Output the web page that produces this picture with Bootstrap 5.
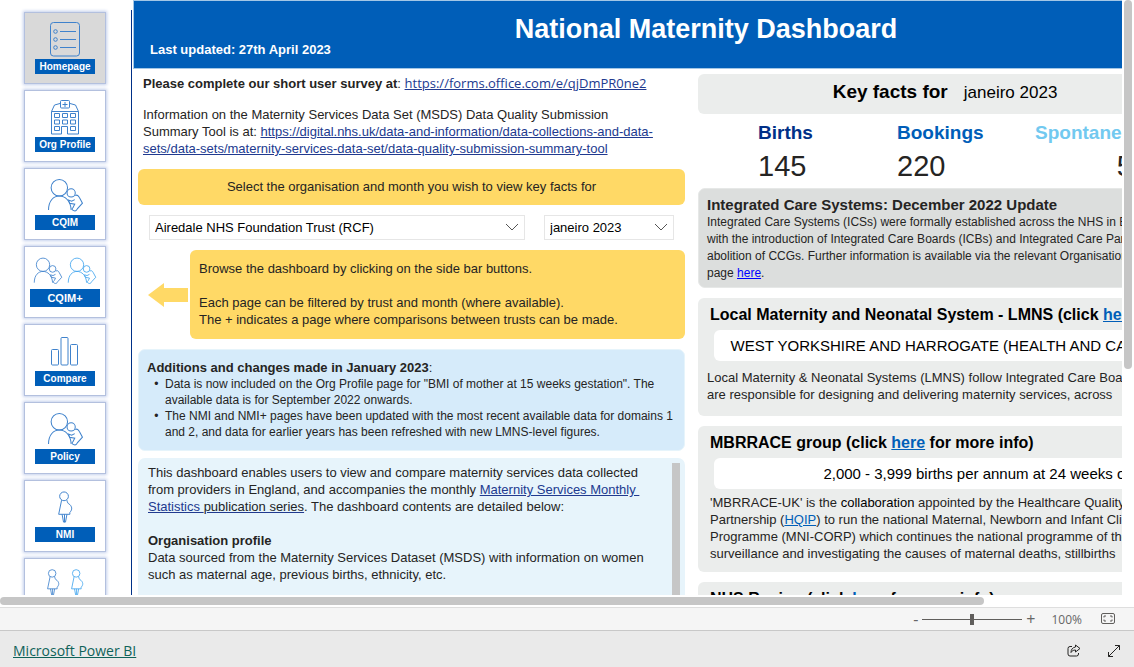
<!DOCTYPE html>
<html lang="en">
<head>
<meta charset="utf-8">
<meta name="viewport" content="width=device-width, initial-scale=1">
<title>National Maternity Dashboard</title>
<link href="https://cdn.jsdelivr.net/npm/bootstrap@5.3.0/dist/css/bootstrap.min.css" rel="stylesheet">
<style>
  body { font-family: "Liberation Sans", Arial, sans-serif; font-size: 13px; line-height: 17px; color: #252423; background: #fff; }
  a { color: #213a8f; }
  .viewer { min-height: 0; }
  .viewport { min-width: 0; }
  .canvas { min-width: 1278px; min-height: 720px; }

  /* side bar */
  .side { flex: 0 0 132px; margin-top: 10px; padding: 2px 25px 0 24px; border-right: 1px solid #003087; }
  .tiles { gap: 6px; }
  .tile { height: 72px; padding: 9px 0 0; background: #fff; border: 1px solid #b3c0de; border-radius: 0; box-shadow: 0 0 3px 1px #c3cfec; color: #005eb8; }
  .tile.active { background: #d9d9d9; }
  .tile svg { height: 35px; fill: none; stroke: #3f82cc; stroke-width: 1; flex: none; }
  .tile svg.light { stroke: #41a5ee; }
  .tile-label { width: 60px; margin-top: 2px; background: #005eb8; color: #fff; font-size: 10px; font-weight: 700; line-height: 15px; }
  .tile-wide svg { height: 30px; }
  .tile-wide .tile-label { width: 70px; margin-top: 3px; font-size: 11px; line-height: 18px; }

  /* heading band */
  .band { background: #005eb8; border: 1px solid #a3c7e6; border-width: 1px 0 1px 1px; height: 69px; margin-left: 1px; color: #fff; }
  .band h1 { font-size: 27px; font-weight: 700; line-height: 32px; padding-top: 12px; }
  .band p { font-size: 13px; font-weight: 700; padding-left: 16px; margin-top: -4px; }

  .left-col { flex: 0 0 547px; margin-left: 6px; padding-top: 6px; }
  .intro { padding-left: 5px; }
  .segoe { font-family: "Open Sans", sans-serif; }
  .yellow { background: #ffd966; border-radius: 6px; }
  .prompt { line-height: 36px; margin-top: 12px; }
  .pickers { gap: 19px; margin: 10px 11px; }
  .picker { height: 25px; padding: 1px 24px 0 5px; border: 1px solid #e6e6e6; border-radius: 0; color: #000; font-size: 13px; line-height: 22px; background-size: 14px 9px; background-position: right 5px center;
    background-image: url("data:image/svg+xml,%3csvg xmlns='http://www.w3.org/2000/svg' viewBox='0 0 14 9'%3e%3cpath fill='none' stroke='%23555' d='M1 1l6 6 6-6'/%3e%3c/svg%3e"); }
  .month { width: 130px; }
  .arrow { flex: 0 0 52px; }
  .guide { padding: 10px 9px 11px; }
  .changes { background: #d6ebfa; border: 1px solid #e6f4fb; border-radius: 7px; margin-top: 10px; padding: 9px 8px 10px; }
  .changes ul { padding-left: 18px; font-size: 12px; line-height: 16px; list-style-type: "•  "; }
  .about { background: #e7f4fb; border-radius: 7px; margin-top: 7px; height: 250px; padding: 6px 5px 0 10px; }
  .inner-bar { flex: 0 0 8px; background: #c6c6c6; margin-top: -1px; }

  .right-col { margin-left: 13px; padding-top: 5px; white-space: nowrap; }
  .grey { background: #ebedec; border-radius: 6px; }
  .facts { height: 40px; padding: 0 86px 3px 0; color: #000; }
  .facts h2 { font-size: 19px; font-weight: 700; }
  .facts span { font-size: 17px; }
  .figures { display: grid; grid-template-columns: 139px 138px 196px; padding: 8px 0 6px 60px; }
  .figures dt { font-size: 19px; line-height: 22px; margin-bottom: 6px; }
  .figures dd { font-size: 29px; line-height: 32px; margin: 0; }
  .navy { color: #003087; }
  .blue { color: #005eb8; }
  .sky { color: #72c9f0; }
  .ics { background: #dcdedd; border: 1px solid #e6e8e7; border-radius: 7px; padding: 7px 8px 5px; font-size: 12px; }
  .ics h2 { font-size: 15px; font-weight: 700; line-height: 18px; }
  .ics a { color: #00f; }
  .topic { margin-top: 10px; padding: 6px 0 10px 12px; }
  .topic h2 { font-size: 16px; font-weight: 700; line-height: 21px; color: #000; }
  .topic a { color: #005eb8; }
  .topic .value { background: #fff; border-radius: 6px; color: #000; font-size: 15px; line-height: 31px; margin: 5px 0 5px 4px; }
  .topic .lmns-text { margin-left: -3px; padding: 3px 0; }

  /* scroll bars and viewer chrome */
  .v-track { flex: 0 0 12px; padding-left: 2px; }
  .v-thumb { width: 8px; height: 62%; border-radius: 4px; background: #c6c6c6; }
  .h-track { height: 12px; padding: 2px 0; }
  .h-thumb { width: 86.8%; height: 8px; border-radius: 4px; background: #c6c6c6; }
  .zoom-row { height: 23px; gap: 4px; padding-right: 18px; background: #f5f5f5; border-top: 1px solid #dedede; color: #666; }
  .zoom-row button, .brand-row button { color: inherit; line-height: 1; }
  .zoom-row input { appearance: none; width: 100px; height: 11px; background: linear-gradient(#605e5c, #605e5c) center / 100% 1px no-repeat; }
  .zoom-row input::-webkit-slider-thumb { appearance: none; width: 4px; height: 11px; background: #605e5c; }
  .zoom-row span { font-size: 12px; margin: 0 14px 0 12px; }
  .brand-row { height: 37px; padding: 3px 13px 0; gap: 26px; background: #eaeaea; border-top: 1px solid #c8c8c8; color: #252423; }
  .brand-row a { font-size: 14px; color: #0f6259; }
</style>
</head>
<body class="d-flex flex-column vh-100 overflow-hidden">

<svg class="d-none" aria-hidden="true">
  <symbol id="parent" viewBox="0 0 36 34">
    <circle cx="12" cy="9.500" r="8"/>
    <path d="M1.500 31c0-9 5-13.500 10.500-13.500S23 22 23.500 31"/>
    <circle cx="23.500" cy="14.500" r="4"/>
    <path d="M27.500 17c2-1 3 0 4 2l3 5.500-5 5.500c-1 2-2 2.500-4 1.500s-1-2 0-3l1.500-3-5-1-1-3 3 1 3-1.500"/>
  </symbol>
  <symbol id="bump" viewBox="0 0 18 36">
    <circle cx="8" cy="6.500" r="4.500"/>
    <path d="M5.500 10.500L2.500 25H14v-2c3-3 2-6 0-8-2-1-2.500-2-3-4.500M6 25l1.500 8h2L11 25M8.500 25v8"/>
  </symbol>
</svg>

<div class="viewer d-flex flex-grow-1">
  <div class="viewport flex-grow-1 overflow-hidden">
    <div class="canvas d-flex">

      <nav class="side" aria-label="Dashboard pages">
        <div class="tiles d-flex flex-column">
          <button class="tile active d-flex flex-column align-items-center">
            <svg width="32" viewBox="0 0 32 35"><rect x="1.500" y=".5" width="29" height="33.500" rx="3"/><circle cx="6.500" cy="9.500" r="1.800"/><circle cx="6.500" cy="17.500" r="1.800"/><circle cx="6.500" cy="25.500" r="1.800"/><path d="M11 9.500h16M11 17.500h16M11 25.500h16"/></svg>
            <span class="tile-label">Homepage</span>
          </button>
          <button class="tile d-flex flex-column align-items-center">
            <svg width="30" viewBox="0 0 30 35"><path d="M10 3.500L4.500 5 1.500 11.500v22.500h10V26.500h6V34h11V11.500L25.500 5 20 3.500M1.500 11.500h27"/><rect x="10.500" y=".5" width="9" height="7.500" rx="1"/><path d="M15 2v5M12.500 4.500h5"/><path d="M4.500 13.500h5v4h-5zM12.500 13.500h5v4h-5zM20.500 13.500h5v4h-5zM4.500 20h5v4h-5zM12.500 20h5v4h-5zM20.500 20h5v4h-5zM4.500 26.500h5v4h-5zM20.500 26.500h5v4h-5z"/></svg>
            <span class="tile-label">Org Profile</span>
          </button>
          <button class="tile d-flex flex-column align-items-center">
            <svg width="37"><use href="#parent"/></svg>
            <span class="tile-label">CQIM</span>
          </button>
          <button class="tile tile-wide d-flex flex-column align-items-center">
            <span class="d-flex gap-1"><svg width="30"><use href="#parent"/></svg><svg width="30" class="light"><use href="#parent"/></svg></span>
            <span class="tile-label">CQIM+</span>
          </button>
          <button class="tile d-flex flex-column align-items-center">
            <svg width="28" viewBox="0 0 28 35"><rect x=".5" y="15.500" width="7" height="15.500" rx="1"/><rect x="10" y="3.500" width="7" height="27.500" rx="1"/><rect x="19.500" y="10.500" width="7" height="20.500" rx="1"/></svg>
            <span class="tile-label">Compare</span>
          </button>
          <button class="tile d-flex flex-column align-items-center">
            <svg width="37"><use href="#parent"/></svg>
            <span class="tile-label">Policy</span>
          </button>
          <button class="tile d-flex flex-column align-items-center">
            <svg width="18"><use href="#bump"/></svg>
            <span class="tile-label">NMI</span>
          </button>
          <button class="tile tile-wide d-flex flex-column align-items-center">
            <span class="d-flex gap-2"><svg width="16"><use href="#bump"/></svg><svg width="16" class="light"><use href="#bump"/></svg></span>
            <span class="tile-label">NMI+</span>
          </button>
        </div>
      </nav>

      <div class="flex-grow-1">
        <header class="band">
          <h1 class="text-center mb-0">National Maternity Dashboard</h1>
          <p class="mb-0">Last updated: 27th April 2023</p>
        </header>

        <div class="d-flex">
          <main class="left-col">
            <div class="intro">
              <p class="mb-0"><b>Please complete our short user survey at</b>: <a class="segoe" href="#">https://forms.office.com/e/qjDmPR0ne2</a></p>
              <p class="mb-0" style="padding-top:14px">Information on the Maternity Services Data Set (MSDS) Data Quality Submission<br>Summary Tool is at: <a href="#">https://digital.nhs.uk/data-and-information/data-collections-and-data-<br>sets/data-sets/maternity-services-data-set/data-quality-submission-summary-tool</a></p>
            </div>

            <div class="yellow prompt text-center">Select the organisation and month you wish to view key facts for</div>

            <div class="pickers d-flex">
              <select class="form-select picker flex-grow-1" aria-label="Organisation"><option>Airedale NHS Foundation Trust (RCF)</option></select>
              <select class="form-select picker month flex-shrink-0" aria-label="Month"><option>janeiro 2023</option></select>
            </div>

            <div class="d-flex align-items-center">
              <div class="arrow"><svg class="d-block ms-auto me-0" width="42" height="24" viewBox="0 0 42 24"><path fill="#ffd966" d="M0 12L16 0v5h24v14H16v5z"/></svg></div>
              <div class="yellow guide flex-grow-1">Browse the dashboard by clicking on the side bar buttons.<br><br>Each page can be filtered by trust and month (where available).<br>The + indicates a page where comparisons between trusts can be made.</div>
            </div>

            <section class="changes">
              <b>Additions and changes made in January 2023</b>:
              <ul class="mb-0">
                <li>Data is now included on the Org Profile page for "BMI of mother at 15 weeks gestation". The<br>available data is for September 2022 onwards.</li>
                <li>The NMI and NMI+ pages have been updated with the most recent available data for domains 1<br>and 2, and data for earlier years has been refreshed with new LMNS-level figures.</li>
              </ul>
            </section>

            <section class="about d-flex">
              <div class="flex-grow-1">
                This dashboard enables users to view and compare maternity services data collected<br>from providers in England, and accompanies the monthly <a href="#">Maternity Services Monthly&nbsp;<br>Statistics <span class="text-body">publication series</span></a>. The dashboard contents are detailed below:<br><br>
                <b>Organisation profile</b><br>Data sourced from the Maternity Services Dataset (MSDS) with information on women<br>such as maternal age, previous births, ethnicity, etc.
              </div>
              <div class="inner-bar"></div>
            </section>
          </main>

          <aside class="right-col flex-grow-1">
            <div class="grey facts d-flex align-items-center justify-content-center gap-3">
              <h2 class="mb-0">Key facts for</h2><span>janeiro 2023</span>
            </div>
            <dl class="figures mb-0">
              <div><dt class="navy">Births</dt><dd>145</dd></div>
              <div><dt class="blue">Bookings</dt><dd>220</dd></div>
              <div class="text-center"><dt class="sky text-start">Spontaneous births</dt><dd>55</dd></div>
            </dl>

            <section class="ics">
              <h2 class="mb-0">Integrated Care Systems: December 2022 Update</h2>
              Integrated Care Systems (ICSs) were formally established across the NHS in England<br>with the introduction of Integrated Care Boards (ICBs) and Integrated Care Partnerships<br>abolition of CCGs. Further information is available via the relevant Organisation<br>page <a href="#">here</a>.
            </section>

            <section class="grey topic">
              <h2 class="mb-0">Local Maternity and Neonatal System - LMNS (click <a href="#">here</a>)</h2>
              <div class="value text-center">WEST YORKSHIRE AND HARROGATE (HEALTH AND CARE PARTNERSHIP)</div>
              <p class="lmns-text mb-0">Local Maternity &amp; Neonatal Systems (LMNS) follow Integrated Care Boards<br>are responsible for designing and delivering maternity services, across</p>
            </section>

            <section class="grey topic">
              <h2 class="mb-0">MBRRACE group (click <a href="#">here</a> for more info)</h2>
              <div class="value text-center">2,000 - 3,999 births per annum at 24 weeks or more</div>
              <p class="mb-0">'MBRRACE-UK' is the <span class="text-black">collaboration</span> appointed by the Healthcare Quality<br>Partnership (<a href="#">HQIP</a>) to run the national Maternal, Newborn and Infant Clinical<br>Programme (MNI-CORP) which continues the national programme of the<br>surveillance and investigating the causes of maternal deaths, stillbirths</p>
            </section>

            <section class="grey topic">
              <h2 class="mb-0">NHS Region (click <a href="#">here</a> for more info)</h2>
            </section>
          </aside>
        </div>
      </div>
    </div>
  </div>
  <div class="v-track"><div class="v-thumb"></div></div>
</div>

<div class="h-track flex-shrink-0"><div class="h-thumb"></div></div>

<div class="zoom-row segoe d-flex align-items-center justify-content-end flex-shrink-0">
  <button class="btn p-0 border-0" aria-label="Zoom out">-</button>
  <input type="range" aria-label="Zoom" min="0" max="200" value="100">
  <button class="btn p-0 border-0" aria-label="Zoom in">+</button>
  <span>100%</span>
  <button class="btn p-0 border-0 d-flex" aria-label="Fit to page"><svg width="16" height="12" viewBox="0 0 16 12" fill="none" stroke="#605e5c"><rect x="1.500" y=".5" width="13" height="10" rx="1.500"/><path d="M6 3H4v1.500M4 6.500V8h2M10 3h2v1.500M12 6.500V8h-2"/></svg></button>
</div>

<footer class="brand-row d-flex align-items-center flex-shrink-0">
  <a class="segoe me-auto" href="#">Microsoft Power BI</a>
  <button class="btn p-0 border-0 d-flex" aria-label="Share"><svg width="14" height="14" viewBox="0 0 14 14" fill="none" stroke="#252423"><path d="M5 2.500H3a2 2 0 0 0-2 2V10a2 2 0 0 0 2 2h6.500a2 2 0 0 0 2-2V9"/><path d="M8.500 1L13 4.500 8.500 8V6C6 6 5 7 4 8.500c0-3 1.500-5 4.500-5.500z"/></svg></button>
  <button class="btn p-0 border-0 d-flex" aria-label="Full screen"><svg width="14" height="14" viewBox="0 0 14 14" fill="none" stroke="#252423"><path d="M1.500 12.500l11-11M8 1.500h4.500V6M1.500 8v4.500H6"/></svg></button>
</footer>

<script src="https://cdn.jsdelivr.net/npm/bootstrap@5.3.0/dist/js/bootstrap.bundle.min.js"></script>
</body>
</html>
